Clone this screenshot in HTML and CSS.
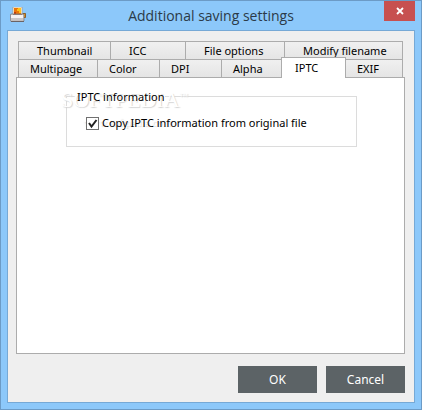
FILE: index.html
```html
<!DOCTYPE html>
<html lang="en">
<head>
    <meta charset="UTF-8">
    <title>Additional saving settings</title>
    <link rel="stylesheet" href="styles.css">
</head>
<body>
    <div class="window">
        <header class="titlebar">
            <svg class="app-icon" viewBox="0 0 16 16" aria-hidden="true">
                <rect x="3" y="0" width="9" height="8" fill="#fff8e8" stroke="#a98a66" stroke-width=".6"/>
                <rect x="4" y="1" width="7" height="6" fill="#e87508"/>
                <path d="M8 1h3v5H9V4H7V2h1z" fill="#ffc21c"/>
                <path d="M4 5h2v2H4z" fill="#c83c04"/>
                <path d="M13 6.5h2.5v4H13z" fill="#f09a18" stroke="#7c4a14" stroke-width=".8"/>
                <rect x="0.4" y="7" width="13.6" height="7.4" rx="1" fill="#c9c6c6" stroke="#7b7474" stroke-width=".7"/>
                <rect x="1" y="8" width="12" height="3" fill="#f4f2f2"/>
                <path d="M3 7h9v1H3z" fill="#8a7d78"/>
                <path d="M1 14h13v1H1z" fill="#6b6364"/>
            </svg>
            <h1 class="title">Additional saving settings</h1>
            <button class="close" type="button" aria-label="Close">
                <svg width="8" height="8" viewBox="0 0 8 8" aria-hidden="true">
                    <path d="M1 1l6 6M7 1L1 7" stroke="#fff" stroke-width="1.8"/>
                </svg>
            </button>
        </header>
        <main class="content">
            <div class="tabs" role="tablist">
                <div class="tab-row tab-row-top">
                    <button class="tab" type="button" role="tab">Thumbnail</button>
                    <button class="tab" type="button" role="tab">ICC</button>
                    <button class="tab" type="button" role="tab">File options</button>
                    <button class="tab" type="button" role="tab">Modify filename</button>
                </div>
                <div class="tab-row tab-row-bottom">
                    <button class="tab" type="button" role="tab">Multipage</button>
                    <button class="tab" type="button" role="tab">Color</button>
                    <button class="tab" type="button" role="tab">DPI</button>
                    <button class="tab" type="button" role="tab">Alpha</button>
                    <button class="tab active" type="button" role="tab" aria-selected="true">IPTC</button>
                    <button class="tab" type="button" role="tab">EXIF</button>
                </div>
            </div>
            <section class="panel" role="tabpanel">
                <div class="watermark" aria-hidden="true">
                    <div class="watermark-name">SOFTPEDIA<sup>™</sup></div>
                    <div class="watermark-url">www.softpedia.com</div>
                </div>
                <fieldset class="group">
                    <legend>IPTC information</legend>
                    <label class="option">
                        <input type="checkbox" checked>
                        <svg class="tick" width="13" height="13" viewBox="0 0 13 13" aria-hidden="true">
                            <path d="M3 6l2.5 3.5L10.5 3" fill="none" stroke="#222" stroke-width="2"/>
                        </svg>
                        <span>Copy IPTC information from original file</span>
                    </label>
                </fieldset>
            </section>
            <footer class="actions">
                <button class="action" type="button">OK</button>
                <button class="action" type="button">Cancel</button>
            </footer>
        </main>
    </div>
</body>
</html>
```

FILE: styles.css
```css
* {
    box-sizing: border-box;
}
body {
    margin: 0;
    font-family: "Noto Sans", "Open Sans", sans-serif;
    font-size: 11px;
    color: #000;
}
button {
    font: inherit;
    color: inherit;
    border: none;
    padding: 0;
}
.window {
    display: flex;
    flex-direction: column;
    min-height: 100vh;
    padding: 0 6px 6px;
    background: #8cc8fa;
    border: 1px solid #6c9bc6;
}
.titlebar {
    display: flex;
    align-items: flex-start;
    height: 29px;
    padding-left: 3px;
}
.app-icon {
    width: 16px;
    height: 16px;
    margin-top: 6px;
}
.title {
    flex: 1;
    margin: 0;
    padding-left: 12px;
    font-family: "Open Sans", sans-serif;
    font-size: 14px;
    font-weight: 400;
    line-height: 30px;
    text-align: center;
    color: #2b3a48;
}
.close {
    display: flex;
    align-items: center;
    justify-content: center;
    width: 31px;
    height: 20px;
    background: #c75050;
}
.content {
    flex: 1;
    display: flex;
    flex-direction: column;
    padding: 10px 9px 9px 8px;
    background: #efefef;
    border: 1px solid #76a9d6;
}
.tabs {
    padding: 0 2px;
}
.tab-row {
    display: grid;
    height: 18px;
    border-left: 1px solid #acacac;
}
.tab-row-top {
    grid-template-columns: 92fr 75fr 99fr 118fr;
}
.tab-row-bottom {
    grid-template-columns: 79fr 62fr 62fr 60fr 64fr 57fr;
}
.tab {
    height: 18px;
    padding-left: 18px;
    line-height: 18px;
    text-align: left;
    white-space: nowrap;
    background: linear-gradient(#f0f0f0, #e5e5e5);
    border-top: 1px solid #acacac;
    border-right: 1px solid #acacac;
}
.tab-row-bottom .tab {
    padding-left: 11px;
}
.tab-row-bottom .tab.active {
    z-index: 1;
    height: 21px;
    margin: -2px 0 0 -1px;
    padding-left: 13px;
    background: #fff;
    border-left: 1px solid #acacac;
}
.panel {
    position: relative;
    flex: 1;
    padding: 12px 47px 0 49px;
    background: #fff;
    border: 1px solid #acacac;
}
.group {
    min-width: 0;
    margin: 0;
    padding: 12px 19px 15px;
    border: 1px solid #dcdcdc;
}
.group legend {
    position: relative;
    margin-left: -10px;
    padding: 0 1px;
    line-height: 13px;
}
.option {
    position: relative;
    display: flex;
    align-items: center;
    gap: 3px;
    line-height: 16px;
}
.option input {
    appearance: none;
    width: 13px;
    height: 13px;
    margin: 0;
    background: #fff;
    border: 1px solid #707070;
}
.option .tick {
    position: absolute;
    left: 0;
    visibility: hidden;
}
.option input:checked + .tick {
    visibility: visible;
}
.watermark {
    position: absolute;
    top: 10px;
    left: 44px;
    font-family: "Liberation Serif", serif;
    color: #fff;
    text-shadow: 1px 1px 1px #d4d4d4;
    pointer-events: none;
}
.watermark-name {
    font-size: 22px;
    line-height: 24px;
}
.watermark-name sup {
    font-size: 9px;
    line-height: 0;
}
.watermark-url {
    padding-left: 22px;
    font-size: 11px;
    line-height: 20px;
}
.actions {
    display: flex;
    justify-content: flex-end;
    gap: 9px;
    padding-top: 12px;
}
.action {
    width: 79px;
    height: 27px;
    font-size: 12px;
    color: #fff;
    background: #5c6366;
}
```
